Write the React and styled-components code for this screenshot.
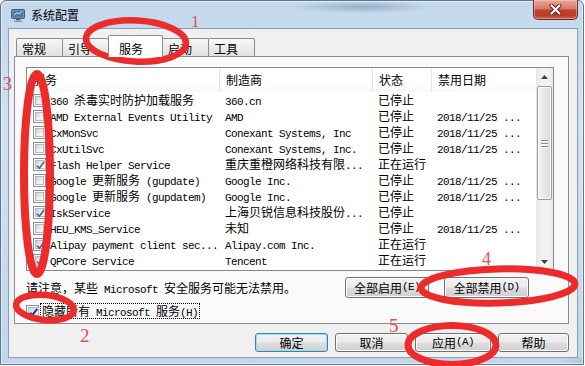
import React from 'react';
import styled, { createGlobalStyle } from 'styled-components';

const CJK = `"Noto Sans CJK SC", "Noto Sans", sans-serif`;

const GlobalStyle = createGlobalStyle`
  html, body {
    margin: 0;
    padding: 0;
    background: #ffffff;
  }
  body {
    font-family: ${CJK};
    font-size: 12px;
    color: #000;
  }
`;

const tabs = [
  { label: '常规', w: 47 },
  { label: '引导', w: 47 },
  { label: '服务', w: 55, active: true },
  { label: '启动', w: 47 },
  { label: '工具', w: 47 },
];

const rows = [
  { on: false, name: '360 杀毒实时防护加载服务', maker: '360.cn', state: '已停止', date: '' },
  { on: false, name: 'AMD External Events Utility', maker: 'AMD', state: '已停止', date: '2018/11/25 ...' },
  { on: false, name: 'CxMonSvc', maker: 'Conexant Systems, Inc', state: '已停止', date: '2018/11/25 ...' },
  { on: false, name: 'CxUtilSvc', maker: 'Conexant Systems, Inc.', state: '已停止', date: '2018/11/25 ...' },
  { on: true, name: 'Flash Helper Service', maker: '重庆重橙网络科技有限...', state: '正在运行', date: '' },
  { on: false, name: 'Google 更新服务 (gupdate)', maker: 'Google Inc.', state: '已停止', date: '2018/11/25 ...' },
  { on: false, name: 'Google 更新服务 (gupdatem)', maker: 'Google Inc.', state: '已停止', date: '2018/11/25 ...' },
  { on: true, name: 'IskService', maker: '上海贝锐信息科技股份...', state: '已停止', date: '' },
  { on: false, name: 'HEU_KMS_Service', maker: '未知', state: '已停止', date: '2018/11/25 ...' },
  { on: true, name: 'Alipay payment client sec...', maker: 'Alipay.com Inc.', state: '正在运行', date: '' },
  { on: true, name: 'QPCore Service', maker: 'Tencent', state: '正在运行', date: '' },
];

//Split text in ascii / cjk runs so the ascii gets the half-width mono face
const runs = (text) => text.match(/[ -~]+|[^ -~]+/g) || [];

const Mixed = ({ text }) =>
  runs(text).map((part, i) =>
    /^[ -~]/.test(part)
      ? <Latin key={i}>{part}</Latin>
      : <React.Fragment key={i}>{part}</React.Fragment>
  );

const CheckBox = ({ checked, dark }) => (
  <Box>
    <BoxFill>
      {checked && (
        <svg width="9" height="9" viewBox="0 0 9 9" style={{ overflow: 'visible' }}>
          <path
            d="M1 4.6 L3.4 7.2 L8.2 0.8"
            fill="none"
            stroke={dark ? '#1b3a8c' : '#4f6493'}
            strokeWidth={dark ? 2.1 : 1.6}
          />
        </svg>
      )}
    </BoxFill>
  </Box>
);

const AppIcon = () => (
  <svg width="16" height="16" viewBox="0 0 16 16">
    <rect x="1.5" y="2.5" width="13" height="9" rx="1" fill="#7f8c99" stroke="#4a5663" />
    <rect x="3" y="4" width="10" height="6" fill="#3f79c0" />
    <path d="M4 8 L7 5.5 L9 7 L12 4.5" stroke="#d9ecff" strokeWidth="1" fill="none" />
    <rect x="6" y="12" width="4" height="1.5" fill="#5a6673" />
    <rect x="4" y="13.5" width="8" height="1.5" fill="#8c98a4" />
  </svg>
);

export default function App() {
  return (
    <>
      <GlobalStyle />
      <Stage>
        <Window>
          <TitleBar>
            <AppIcon />
            <Title>系统配置</Title>
            <CloseButton>
              <svg width="13" height="11" viewBox="0 0 13 11">
                <path d="M2.5 1.5 L10.5 9.5 M10.5 1.5 L2.5 9.5" stroke="#5b1a10" strokeWidth="4" strokeLinecap="round" />
                <path d="M2.5 1.5 L10.5 9.5 M10.5 1.5 L2.5 9.5" stroke="#ffffff" strokeWidth="2.2" strokeLinecap="round" />
              </svg>
            </CloseButton>
          </TitleBar>

          <Client>
            <TabStrip>
              {tabs.map((t) => (
                <Tab key={t.label} $w={t.w} $active={t.active}>{t.label}</Tab>
              ))}
            </TabStrip>

            <TabPanel>
              {/* Service list */}
              <ListBox>
                <ListBody>
                  <HeaderRow>
                    <HeaderCell>服务</HeaderCell>
                    <HeaderCell>制造商</HeaderCell>
                    <HeaderCell>状态</HeaderCell>
                    <HeaderCell>禁用日期</HeaderCell>
                  </HeaderRow>
                  {rows.map((r) => (
                    <Row key={r.name}>
                      <NameCell>
                        <CheckBox checked={r.on} />
                        <NameText><Mixed text={r.name} /></NameText>
                      </NameCell>
                      <Cell><Mixed text={r.maker} /></Cell>
                      <Cell>{r.state}</Cell>
                      <Cell><Mixed text={r.date} /></Cell>
                    </Row>
                  ))}
                </ListBody>
                <ScrollBar>
                  <ScrollButton>
                    <svg width="7" height="4" viewBox="0 0 7 4"><path d="M0 4 L3.5 0 L7 4 Z" fill="#404040" /></svg>
                  </ScrollButton>
                  <Thumb>
                    <Grip />
                    <Grip />
                    <Grip />
                  </Thumb>
                  <ScrollButton $down>
                    <svg width="7" height="4" viewBox="0 0 7 4"><path d="M0 0 L3.5 4 L7 0 Z" fill="#404040" /></svg>
                  </ScrollButton>
                </ScrollBar>
              </ListBox>

              <NoteRow>
                <span><Mixed text="请注意，某些 Microsoft 安全服务可能无法禁用。" /></span>
                <NoteButtons>
                  <Button $w={84} $h={21}><Mixed text="全部启用(E)" /></Button>
                  <Button $w={85} $h={21}><Mixed text="全部禁用(D)" /></Button>
                </NoteButtons>
              </NoteRow>

              <HideRow>
                <CheckBox checked dark />
                <FocusLabel><Mixed text="隐藏所有 Microsoft 服务(H)" /></FocusLabel>
              </HideRow>
            </TabPanel>

            <DialogButtons>
              <Button $w={73} $default>确定</Button>
              <Button $w={73}>取消</Button>
              <Button $w={76}><Mixed text="应用(A)" /></Button>
              <Button $w={71}>帮助</Button>
            </DialogButtons>
          </Client>
        </Window>

        {/* Red hand drawn annotations on top of the dialog */}
        <Marks width="585" height="366" viewBox="0 0 585 366">
          <g fill="none" stroke="#ec2b2b" strokeWidth="6.5">
            <ellipse cx="136" cy="41" rx="50" ry="20.5" transform="rotate(3 136 41)" />
            <ellipse cx="37" cy="174" rx="13" ry="100" strokeWidth="8" />
            <ellipse cx="45" cy="307.5" rx="29" ry="12.5" transform="rotate(6 45 307.5)" />
            <ellipse cx="498" cy="286" rx="77" ry="17" strokeWidth="7" transform="rotate(-1.5 498 286)" />
            <ellipse cx="452" cy="345" rx="44" ry="19.5" strokeWidth="7" />
          </g>
          <g fill="#e2504f" fontFamily='"Liberation Serif", serif'>
            <text x="191" y="27" fontSize="17">1</text>
            <text x="80" y="342" fontSize="19">2</text>
            <text x="3" y="90" fontSize="18">3</text>
            <text x="482" y="265" fontSize="18">4</text>
            <text x="389" y="332" fontSize="19">5</text>
          </g>
        </Marks>
      </Stage>
    </>
  );
}

//Component Styles
const Stage = styled.div`
  position: relative;
  width: 585px;
  height: 366px;
  overflow: hidden;
`;

const Window = styled.div`
  box-sizing: border-box;
  width: 584px;
  height: 365px;
  display: flex;
  flex-direction: column;
  border: 1px solid #5f7489;
  border-radius: 6px 6px 0 0;
  background:
    radial-gradient(ellipse 70px 6px at 360px 6px, rgba(70, 95, 125, 0.35), transparent),
    radial-gradient(ellipse 40px 5px at 600px 360px, rgba(70, 95, 125, 0.3), transparent),
    linear-gradient(180deg, #c3d8ee 0%, #cfe1f4 35%, #c0d6ec 100%);
  box-shadow: inset 0 0 0 1px rgba(255, 255, 255, 0.55);
`;

const TitleBar = styled.div`
  height: 27px;
  flex: none;
  display: flex;
  align-items: center;
  padding-left: 9px;
`;

const Title = styled.span`
  margin-left: 5px;
  font-family: ${CJK};
  font-size: 12px;
  color: #000;
`;

const CloseButton = styled.div`
  align-self: flex-start;
  margin: -1px 5px 0 auto;
  width: 45px;
  height: 20px;
  box-sizing: border-box;
  display: flex;
  align-items: center;
  justify-content: center;
  border: 1px solid #6b2a22;
  border-top: none;
  border-radius: 0 0 5px 5px;
  background: linear-gradient(180deg, #e8a898 0%, #d67a66 45%, #c4452f 52%, #b93a26 80%, #d0634c 100%);
  box-shadow: inset 0 0 0 1px rgba(255, 210, 200, 0.45);
`;

const Client = styled.div`
  flex: 1;
  margin: 0 5px 6px 7px;
  display: flex;
  flex-direction: column;
  padding-top: 6px;
  border: 1px solid #8b9db1;
  background: #f0f0f0;
`;

const TabStrip = styled.div`
  height: 21px;
  flex: none;
  display: flex;
  align-items: flex-end;
  margin-left: 7px;
`;

const Tab = styled.div`
  position: relative;
  z-index: ${(p) => (p.$active ? 1 : 0)};
  box-sizing: border-box;
  width: ${(p) => p.$w}px;
  height: ${(p) => (p.$active ? 22 : 18)}px;
  margin-left: -1px;
  margin-bottom: ${(p) => (p.$active ? -1 : 0)}px;
  padding: ${(p) => (p.$active ? '5px 0 0 10px' : '2px 0 0 5px')};
  line-height: 16px;
  font-family: ${CJK};
  font-size: 12px;
  border: 1px solid #898c95;
  border-bottom: none;
  border-radius: 2px 2px 0 0;
  background: ${(p) => (p.$active ? '#ffffff' : 'linear-gradient(180deg, #f7f7f7 0%, #ececec 50%, #e0e0e0 100%)')};

  &:first-child {
    margin-left: 0;
  }
`;

const TabPanel = styled.div`
  box-sizing: border-box;
  height: 268px;
  flex: none;
  margin: 0 8px 0 5px;
  border: 1px solid #898c95;
  background: #fafafa;
  display: flex;
  flex-direction: column;
`;

const ListBox = styled.div`
  box-sizing: border-box;
  height: 204px;
  margin: 10px 14px 0 11px;
  display: flex;
  border: 1px solid #828790;
  background: #ffffff;
`;

const ListBody = styled.div`
  flex: 1;
  display: flex;
  flex-direction: column;
  overflow: hidden;
`;

const columns = `193px 153px 59px 1fr`;

const HeaderRow = styled.div`
  display: grid;
  grid-template-columns: ${columns};
  height: 24px;
  flex: none;
  background: linear-gradient(180deg, #ffffff 0%, #ffffff 60%, #f7f8f9 100%);
`;

const HeaderCell = styled.div`
  padding-left: 6px;
  line-height: 24px;
  font-family: ${CJK};
  font-size: 12px;
  border-right: 1px solid #e5e5e5;
  white-space: nowrap;
  overflow: hidden;

  &:last-child {
    border-right: none;
  }
`;

const Row = styled.div`
  display: grid;
  grid-template-columns: ${columns};
  height: 16px;
  flex: none;
  line-height: 16px;
`;

const NameCell = styled.div`
  display: flex;
  align-items: center;
  padding-left: 6px;
  white-space: nowrap;
`;

const NameText = styled.span`
  margin-left: 4px;
  line-height: 16px;
  white-space: nowrap;
`;

const Cell = styled.div`
  padding-left: 5px;
  white-space: nowrap;
  overflow: hidden;
`;

const Latin = styled.span`
  font-family: "Liberation Mono", monospace;
  font-size: 11px;
  line-height: 1;
  letter-spacing: -0.6px;
`;

const Box = styled.span`
  box-sizing: border-box;
  flex: none;
  width: 13px;
  height: 13px;
  padding: 1px;
  display: inline-flex;
  border: 1px solid #8e8f8f;
  background: #ffffff;
`;

const BoxFill = styled.span`
  flex: 1;
  display: flex;
  border: 1px solid #b4b8be;
  background: linear-gradient(135deg, #cfd2d7 0%, #eeeff0 60%, #fbfbfb 100%);
`;

const ScrollBar = styled.div`
  width: 17px;
  flex: none;
  display: flex;
  flex-direction: column;
  background: linear-gradient(90deg, #e6e6e6 0%, #f3f3f3 40%, #f3f3f3 70%, #e9e9e9 100%);
`;

const ScrollButton = styled.div`
  height: 17px;
  flex: none;
  margin-top: ${(p) => (p.$down ? 'auto' : '0')};
  display: flex;
  align-items: center;
  justify-content: center;
`;

const Thumb = styled.div`
  box-sizing: border-box;
  height: 114px;
  margin: 1px 1px 0 1px;
  display: flex;
  flex-direction: column;
  align-items: center;
  justify-content: center;
  gap: 2px;
  border: 1px solid #9b9b9b;
  border-radius: 2px;
  background: linear-gradient(90deg, #f3f3f3 0%, #e8e8e8 50%, #d9d9d9 100%);
  box-shadow: inset 0 0 0 1px #fafafa;
`;

const Grip = styled.span`
  width: 7px;
  height: 1px;
  background: #8c8c8c;
  box-shadow: 0 1px 0 #fdfdfd;
`;

const NoteRow = styled.div`
  height: 21px;
  margin-top: 6px;
  padding: 0 39px 0 11px;
  display: flex;
  align-items: center;
  justify-content: space-between;
  white-space: nowrap;
`;

const NoteButtons = styled.div`
  display: flex;
  gap: 15px;
`;

const HideRow = styled.div`
  height: 16px;
  margin-top: 5px;
  padding-left: 11px;
  display: flex;
  align-items: center;
`;

const FocusLabel = styled.span`
  box-sizing: border-box;
  height: 16px;
  margin-left: 1px;
  padding: 0 1px;
  line-height: 14px;
  border: 1px dotted #000;
  white-space: nowrap;
`;

const DialogButtons = styled.div`
  margin-top: 9px;
  padding-right: 8px;
  display: flex;
  justify-content: flex-end;
  gap: 7px;
`;

const Button = styled.div`
  box-sizing: border-box;
  width: ${(p) => p.$w}px;
  height: ${(p) => p.$h || 19}px;
  display: flex;
  align-items: center;
  justify-content: center;
  white-space: nowrap;
  font-family: ${CJK};
  font-size: 12px;
  color: #000;
  border: 1px solid ${(p) => (p.$default ? '#3c7fb1' : '#707070')};
  border-radius: 3px;
  background: linear-gradient(180deg, #f2f2f2 0%, #ebebeb 48%, #dddddd 52%, #cfcfcf 100%);
  box-shadow: inset 0 0 0 1px ${(p) => (p.$default ? '#9fdcf8' : '#fbfbfb')};
`;

const Marks = styled.svg`
  position: absolute;
  left: 0;
  top: 0;
  pointer-events: none;
`;
